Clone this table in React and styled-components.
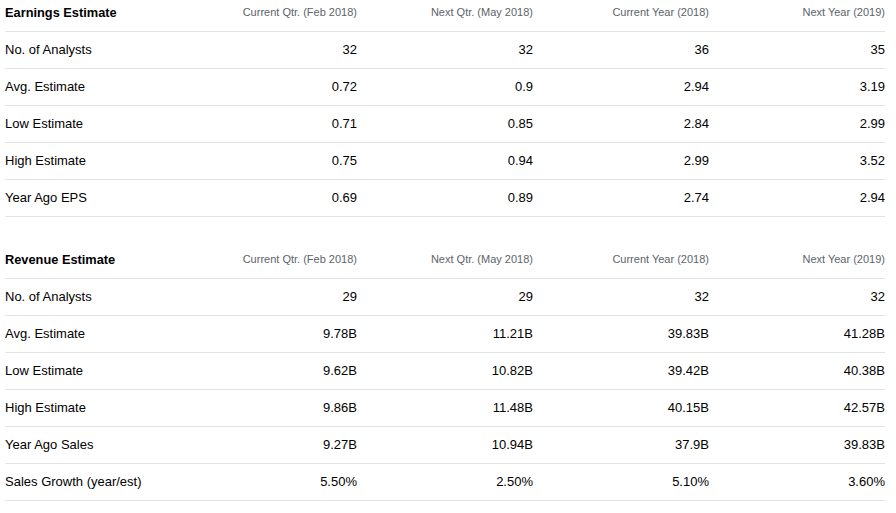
import styled, { createGlobalStyle } from "styled-components";

const GlobalStyle = createGlobalStyle`
  html, body {
    margin: 0;
    padding: 0;
    background: #fff;
  }
  body {
    font-family: "Liberation Sans", Arial, sans-serif;
    color: #000;
  }
`

const Page = styled.div`
  padding: 0 5px;
  width: 880px;
  display: flex;
  flex-direction: column;
  gap: 30px;
`

const Table = styled.section`
  display: flex;
  flex-direction: column;
`

const Row = styled.div`
  display: grid;
  grid-template-columns: repeat(5, 176px);
  box-sizing: border-box;
  height: ${props => props.head ? '32px' : '37px'};
  align-items: ${props => props.head ? 'start' : 'center'};
  padding: ${props => props.head ? '5px 0 0' : '0 0 2px'};
  border-bottom: 1px solid #e3e3e3;
`

const Title = styled.span`
  font-size: 12.8px;
  font-weight: bold;
  line-height: 15px;
`

const ColHead = styled.span`
  font-size: 11px;
  line-height: 15px;
  color: #5b636a;
  text-align: right;
`

const Label = styled.span`
  font-size: 13px;
  line-height: 15px;
`

const Cell = styled.span`
  font-size: 13px;
  line-height: 15px;
  text-align: right;
`

const columns = [
  "Current Qtr. (Feb 2018)",
  "Next Qtr. (May 2018)",
  "Current Year (2018)",
  "Next Year (2019)",
]

const earnings = [
  ["No. of Analysts", "32", "32", "36", "35"],
  ["Avg. Estimate", "0.72", "0.9", "2.94", "3.19"],
  ["Low Estimate", "0.71", "0.85", "2.84", "2.99"],
  ["High Estimate", "0.75", "0.94", "2.99", "3.52"],
  ["Year Ago EPS", "0.69", "0.89", "2.74", "2.94"],
]

const revenue = [
  ["No. of Analysts", "29", "29", "32", "32"],
  ["Avg. Estimate", "9.78B", "11.21B", "39.83B", "41.28B"],
  ["Low Estimate", "9.62B", "10.82B", "39.42B", "40.38B"],
  ["High Estimate", "9.86B", "11.48B", "40.15B", "42.57B"],
  ["Year Ago Sales", "9.27B", "10.94B", "37.9B", "39.83B"],
  ["Sales Growth (year/est)", "5.50%", "2.50%", "5.10%", "3.60%"],
]

const EstimateTable = ({title, rows}) => (
  <Table>
    <Row head>
      <Title>{title}</Title>
      {columns.map(c => <ColHead key={c}>{c}</ColHead>)}
    </Row>
    {rows.map(([label, ...vals]) => (
      <Row key={label}>
        <Label>{label}</Label>
        {vals.map((v, i) => <Cell key={i}>{v}</Cell>)}
      </Row>
    ))}
  </Table>
)

const App = () => {
  return (
    <>
      <GlobalStyle/>
      <Page>
        <EstimateTable title="Earnings Estimate" rows={earnings}/>
        <EstimateTable title="Revenue Estimate" rows={revenue}/>
      </Page>
    </>
  )
}

export default App
